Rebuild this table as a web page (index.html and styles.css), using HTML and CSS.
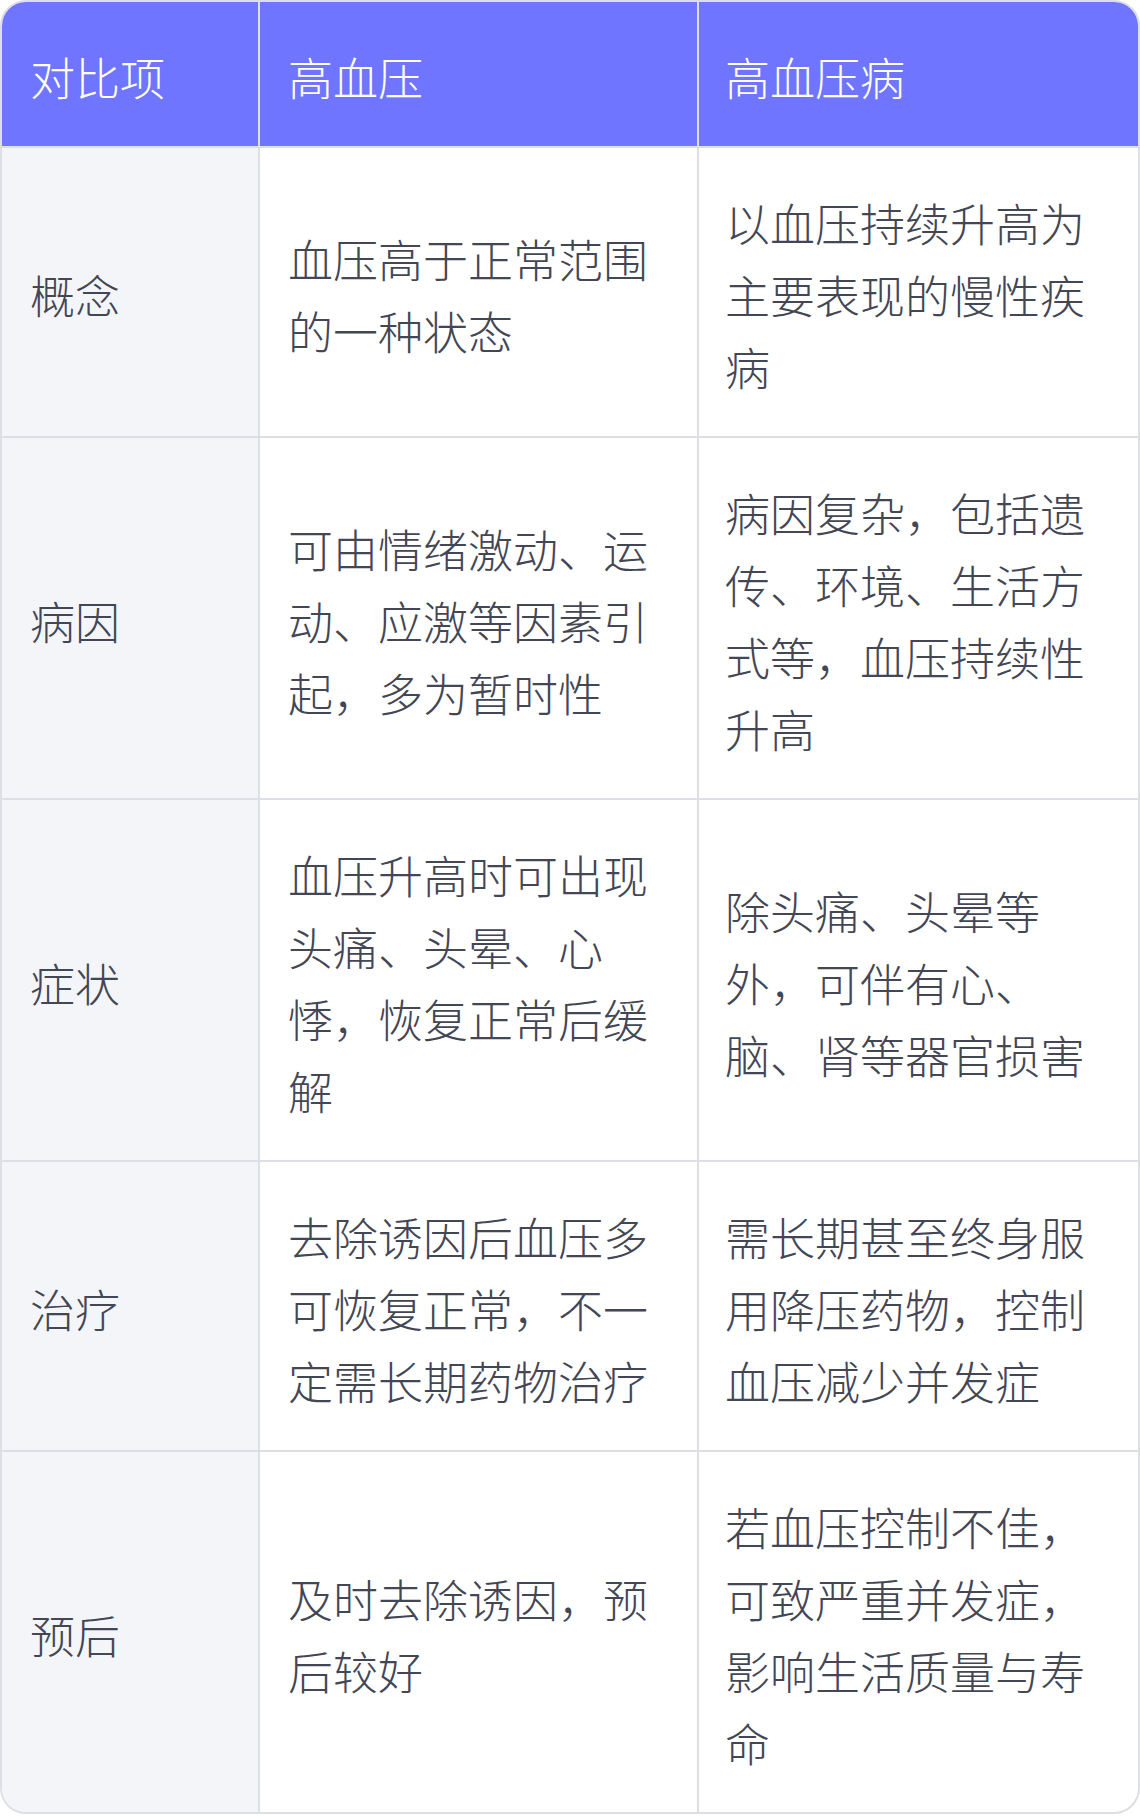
FILE: index.html
```html
<!DOCTYPE html>
<html lang="zh-CN">
<head>
<meta charset="utf-8">
<title>高血压与高血压病对比</title>
<link rel="stylesheet" href="styles.css">
</head>
<body>
<div class="card">
  <table class="cmp">
    <colgroup>
      <col class="c1"><col class="c2"><col class="c3">
    </colgroup>
    <thead>
      <tr><th>对比项</th><th>高血压</th><th>高血压病</th></tr>
    </thead>
    <tbody>
      <tr><td>概念</td><td>血压高于正常范围的一种状态</td><td>以血压持续升高为主要表现的慢性疾病</td></tr>
      <tr><td>病因</td><td>可由情绪激动、运动、应激等因素引起，多为暂时性</td><td>病因复杂，包括遗传、环境、生活方式等，血压持续性升高</td></tr>
      <tr><td>症状</td><td>血压升高时可出现头痛、头晕、心悸，恢复正常后缓解</td><td>除头痛、头晕等外，可伴有心、脑、肾等器官损害</td></tr>
      <tr><td>治疗</td><td>去除诱因后血压多可恢复正常，不一定需长期药物治疗</td><td>需长期甚至终身服用降压药物，控制血压减少并发症</td></tr>
      <tr><td>预后</td><td>及时去除诱因，预后较好</td><td>若血压控制不佳，可致严重并发症，影响生活质量与寿命</td></tr>
    </tbody>
  </table>
</div>
</body>
</html>
```

FILE: styles.css
```css
html, body {
  margin: 0;
  padding: 0;
  background: #ffffff;
}
.card {
  width: 1140px;
  box-sizing: border-box;
  border: 2px solid #dedfe5;
  border-radius: 26px;
  overflow: hidden;
  background: #ffffff;
}
.cmp {
  width: 100%;
  border-collapse: separate;
  border-spacing: 0;
  table-layout: fixed;
  font-family: "Noto Sans CJK SC", "Noto Sans", sans-serif;
  font-size: 45px;
  font-weight: 300;
  line-height: 72px;
  color: #434654;
}
.c1 { width: 258px; }
.c2 { width: 439px; }
.cmp th, .cmp td {
  padding: 39px 28px 33px;
  text-align: left;
  vertical-align: middle;
  border-right: 2px solid #dedfe5;
  border-bottom: 2px solid #dedfe5;
  word-break: break-all;
}
.cmp th:last-child, .cmp td:last-child {
  border-right: none;
  padding-left: 26px;
}
.cmp tbody tr:last-child td {
  border-bottom: none;
}
.cmp th {
  background: #6f75ff;
  color: #ffffff;
  font-weight: 300;
}
.cmp td:first-child {
  background: #f4f5f9;
}
```
